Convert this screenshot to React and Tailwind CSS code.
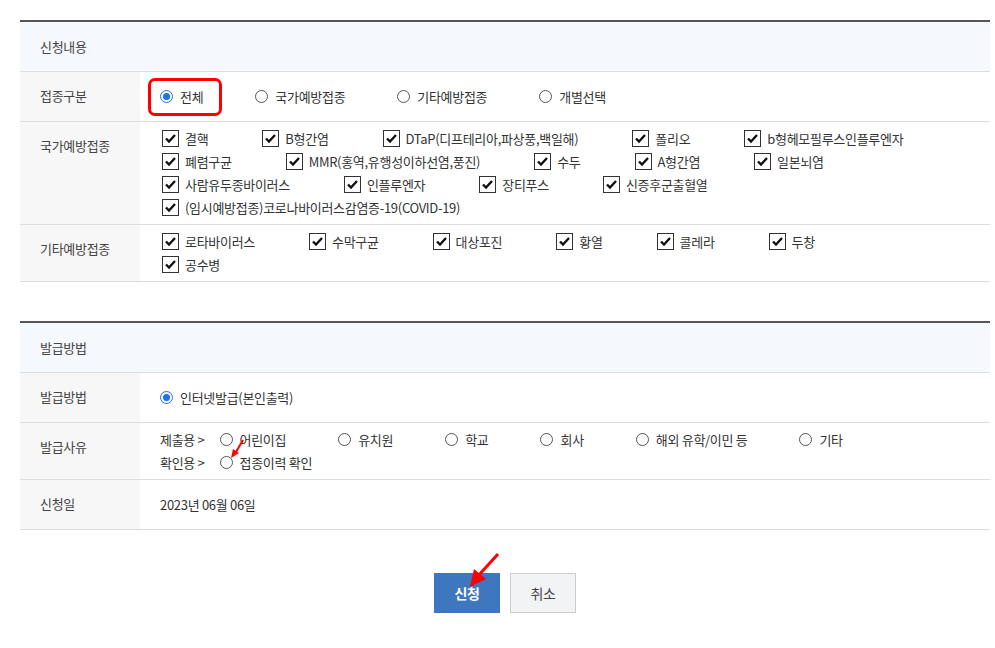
import { Fragment } from 'react';

const NATIONAL = [
  ['결핵', 'B형간염', 'DTaP(디프테리아,파상풍,백일해)', '폴리오', 'b형헤모필루스인플루엔자'],
  ['폐렴구균', 'MMR(홍역,유행성이하선염,풍진)', '수두', 'A형간염', '일본뇌염'],
  ['사람유두종바이러스', '인플루엔자', '장티푸스', '신증후군출혈열'],
  ['(임시예방접종)코로나바이러스감염증-19(COVID-19)'],
];

const OTHER = [
  ['로타바이러스', '수막구균', '대상포진', '황열', '콜레라', '두창'],
  ['공수병'],
];

const SUBMIT_REASONS = ['어린이집', '유치원', '학교', '회사', '해외 유학/이민 등', '기타'];

const CheckItem = ({ label }) => (
  <span className="inline-flex items-center mr-[52px] h-[23px]">
    <span className="w-[17px] h-[17px] border border-[#333] bg-white flex items-center justify-center ml-[2px]">
      <svg width="13" height="13" viewBox="0 0 13 13">
        <path d="M2 6.5 L5 9.5 L11 3" fill="none" stroke="#111" strokeWidth="2.4" />
      </svg>
    </span>
    <span className="ml-[6px]">{label}</span>
  </span>
);

const RadioItem = ({ label, checked, highlight }) => (
  <span className="relative inline-flex items-center mr-[52px] h-[23px]">
    {checked ? (
      <span className="w-[13px] h-[13px] rounded-full border border-[#1a73e8] flex items-center justify-center">
        <span className="w-[7px] h-[7px] rounded-full bg-[#1a73e8]" />
      </span>
    ) : (
      <span className="w-[13px] h-[13px] rounded-full border border-[#555] bg-white" />
    )}
    <span className="ml-[7px]">{label}</span>
    {highlight && (
      <span className="absolute left-[-12px] top-[-7px] w-[74px] h-[38px] border-[3px] border-[#ff0000] rounded-[7px]" />
    )}
  </span>
);

const Row = ({ label, children, tall }) => (
  <div className="flex border-b border-[#dddddd]">
    <div className="w-[120px] shrink-0 bg-[#f7f7f7] pl-5 pt-[14px] pb-[14px] leading-[20px] text-[#444]">
      {label}
    </div>
    <div className={`flex-1 pl-5 py-[5px] flex ${tall ? 'flex-col justify-center' : 'items-center'} min-h-[49px]`}>
      {children}
    </div>
  </div>
);

const Header = ({ title }) => (
  <div className="border-t-2 border-[#555] bg-[#f5f8fc] border-b border-b-[#dddddd] h-[52px] flex items-center pl-5 text-[#444]">
    {title}
  </div>
);

const App = () => {
  return (
    <div
      className="min-h-[648px] bg-white pt-5 pl-5 pr-[5px] text-[13px] tracking-[-0.3px] text-[#333]"
      style={{ fontFamily: '"Noto Sans CJK KR", "Noto Sans", sans-serif' }}
    >
      <Header title="신청내용" />
      <Row label="접종구분">
        <RadioItem label="전체" checked highlight />
        <RadioItem label="국가예방접종" />
        <RadioItem label="기타예방접종" />
        <RadioItem label="개별선택" />
      </Row>
      <Row label="국가예방접종" tall>
        {NATIONAL.map((line, i) => (
          <div key={i} className="flex">
            {line.map(l => <CheckItem key={l} label={l} />)}
          </div>
        ))}
      </Row>
      <Row label="기타예방접종" tall>
        {OTHER.map((line, i) => (
          <div key={i} className="flex">
            {line.map(l => <CheckItem key={l} label={l} />)}
          </div>
        ))}
      </Row>

      <div className="mt-[39px]">
        <Header title="발급방법" />
        <Row label="발급방법">
          <RadioItem label="인터넷발급(본인출력)" checked />
        </Row>
        <Row label="발급사유" tall>
          <div className="flex">
            <span className="inline-flex items-center h-[23px] mr-[15px]">제출용 &gt;</span>
            {SUBMIT_REASONS.map(r => <RadioItem key={r} label={r} />)}
          </div>
          <div className="flex relative">
            <span className="inline-flex items-center h-[23px] mr-[15px]">확인용 &gt;</span>
            <RadioItem label="접종이력 확인" />
            {/* red pointer */}
            <svg className="absolute left-[70px] top-[-12px]" width="16" height="22" viewBox="0 0 16 22">
              <path d="M13 1 L6 13" stroke="#f00" strokeWidth="2" />
              <path d="M1 19 L3 10 L9 14 Z" fill="#f00" />
            </svg>
          </div>
        </Row>
        <Row label="신청일">
          <span>2023년 06월 06일</span>
        </Row>
      </div>

      <div className="mt-[43px] flex justify-center gap-[10px] relative">
        <button className="w-[66px] h-[40px] bg-[#3f77bf] text-white font-bold text-[14px] relative">
          신청
          <svg className="absolute left-[32px] top-[-21px]" width="34" height="38" viewBox="0 0 34 38">
            <path d="M32 2 L12 24" stroke="#f00" strokeWidth="3" />
            <path d="M4 35 L8 17 L20 27 Z" fill="#f00" />
          </svg>
        </button>
        <button className="w-[66px] h-[40px] bg-[#f2f3f5] border border-[#cccccc] text-[#444] text-[14px]">
          취소
        </button>
      </div>
    </div>
  );
};

export default App;
